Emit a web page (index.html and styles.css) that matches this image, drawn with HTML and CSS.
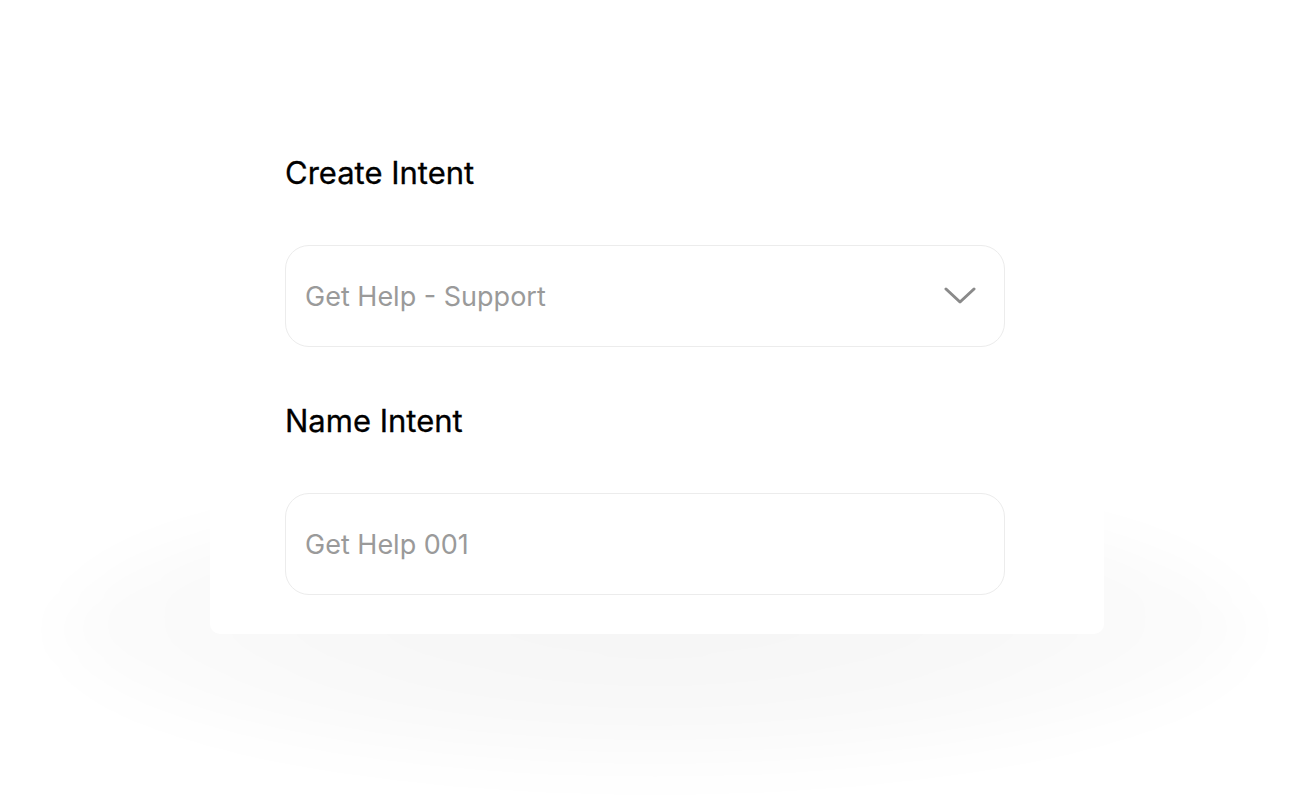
FILE: index.html
```html
<!DOCTYPE html>
<html lang="en">
<head>
<meta charset="utf-8">
<title>Create Intent</title>
<link rel="stylesheet" href="styles.css">
</head>
<body>
<main class="stage">
  <section class="card">
    <h2 class="label">Create Intent</h2>
    <div class="field field-select">
      <span class="placeholder">Get Help - Support</span>
      <svg class="chevron" width="32" height="18" viewBox="0 0 32 18" aria-hidden="true">
        <path d="M2 2 L16 15 L30 2" fill="none" stroke="#8a8a8a" stroke-width="3" stroke-linecap="round" stroke-linejoin="round"/>
      </svg>
    </div>
    <h2 class="label label-second">Name Intent</h2>
    <div class="field">
      <span class="placeholder">Get Help 001</span>
    </div>
  </section>
</main>
</body>
</html>
```
FILE: styles.css
```css
* { box-sizing: border-box; }
html, body {
  margin: 0;
  padding: 0;
  background: #ffffff;
  font-family: "Inter", "Liberation Sans", sans-serif;
}
.stage {
  width: 1314px;
  height: 800px;
  overflow: hidden;
  position: relative;
  padding-top: 115px;
}
.stage::before {
  content: "";
  position: absolute;
  left: 60px;
  top: 490px;
  width: 1190px;
  height: 280px;
  border-radius: 50%;
  background: radial-gradient(ellipse at 50% 45%, rgba(0,0,0,0.04) 0%, rgba(0,0,0,0.028) 40%, rgba(0,0,0,0.012) 70%, rgba(0,0,0,0) 100%);
  filter: blur(24px);
  z-index: 0;
}
.card {
  position: relative;
  z-index: 1;
  margin-left: 210px;
  width: 894px;
  background: #ffffff;
  border-radius: 10px;
  padding: 40px 75px 39px;
}
.label {
  margin: 0 0 54px;
  font-size: 31px;
  line-height: 36px;
  font-weight: 400;
  color: #000000;
  letter-spacing: 0;
  -webkit-text-stroke: 0.3px #000000;
}
.label-second { margin-top: 56px; }
.field {
  width: 720px;
  height: 102px;
  border: 1px solid #ececec;
  border-radius: 24px;
  display: flex;
  align-items: center;
  justify-content: space-between;
  padding: 0 28px 0 19px;
  background: #ffffff;
}
.placeholder {
  font-size: 27px;
  color: #9a9a9a;
  font-weight: 400;
}
.chevron { display: block; }
```
